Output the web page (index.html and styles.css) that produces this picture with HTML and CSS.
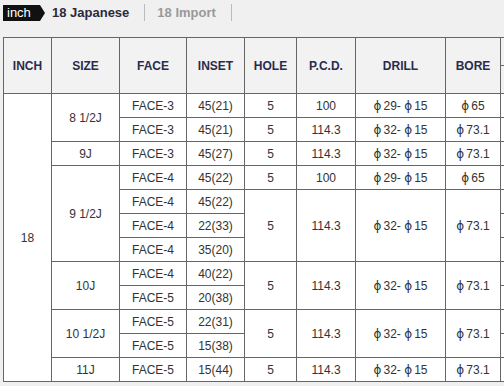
FILE: index.html
```html
<!DOCTYPE html>
<html>
<head>
<meta charset="utf-8">
<link rel="stylesheet" href="styles.css">
</head>
<body>
<div class="tabs">
  <span class="unit">inch</span>
  <span class="tab active">18 Japanese</span>
  <span class="sep"></span>
  <span class="tab">18 Import</span>
  <span class="sep"></span>
</div>
<table class="spec">
  <colgroup>
    <col class="c-inch"><col class="c-size"><col class="c-face"><col class="c-inset"><col class="c-hole"><col class="c-pcd"><col class="c-drill"><col class="c-bore"><col class="c-x"><col class="c-x">
  </colgroup>
  <thead>
    <tr class="h1">
      <th rowspan="2">INCH</th><th rowspan="2">SIZE</th><th rowspan="2">FACE</th><th rowspan="2">INSET</th><th rowspan="2">HOLE</th><th rowspan="2">P.C.D.</th><th rowspan="2">DRILL</th><th rowspan="2">BORE</th><th colspan="2"></th>
    </tr>
    <tr class="h2"><th></th><th></th></tr>
  </thead>
  <tbody>
    <tr><td rowspan="12">18</td><td rowspan="2">8 1/2J</td><td>FACE-3</td><td>45(21)</td><td>5</td><td>100</td><td><span class="phi">ϕ</span>29- <span class="phi">ϕ</span>15</td><td><span class="phi">ϕ</span>65</td><td></td><td></td></tr>
    <tr><td>FACE-3</td><td>45(21)</td><td>5</td><td>114.3</td><td><span class="phi">ϕ</span>32- <span class="phi">ϕ</span>15</td><td><span class="phi">ϕ</span>73.1</td><td></td><td></td></tr>
    <tr><td>9J</td><td>FACE-3</td><td>45(27)</td><td>5</td><td>114.3</td><td><span class="phi">ϕ</span>32- <span class="phi">ϕ</span>15</td><td><span class="phi">ϕ</span>73.1</td><td></td><td></td></tr>
    <tr><td rowspan="4">9 1/2J</td><td>FACE-4</td><td>45(22)</td><td>5</td><td>100</td><td><span class="phi">ϕ</span>29- <span class="phi">ϕ</span>15</td><td><span class="phi">ϕ</span>65</td><td></td><td></td></tr>
    <tr><td>FACE-4</td><td>45(22)</td><td rowspan="3">5</td><td rowspan="3">114.3</td><td rowspan="3"><span class="phi">ϕ</span>32- <span class="phi">ϕ</span>15</td><td rowspan="3"><span class="phi">ϕ</span>73.1</td><td></td><td></td></tr>
    <tr><td>FACE-4</td><td>22(33)</td><td></td><td></td></tr>
    <tr><td>FACE-4</td><td>35(20)</td><td></td><td></td></tr>
    <tr><td rowspan="2">10J</td><td>FACE-4</td><td>40(22)</td><td rowspan="2">5</td><td rowspan="2">114.3</td><td rowspan="2"><span class="phi">ϕ</span>32- <span class="phi">ϕ</span>15</td><td rowspan="2"><span class="phi">ϕ</span>73.1</td><td></td><td></td></tr>
    <tr><td>FACE-5</td><td>20(38)</td><td></td><td></td></tr>
    <tr><td rowspan="2">10 1/2J</td><td>FACE-5</td><td>22(31)</td><td rowspan="2">5</td><td rowspan="2">114.3</td><td rowspan="2"><span class="phi">ϕ</span>32- <span class="phi">ϕ</span>15</td><td rowspan="2"><span class="phi">ϕ</span>73.1</td><td></td><td></td></tr>
    <tr><td>FACE-5</td><td>15(38)</td><td></td><td></td></tr>
    <tr><td>11J</td><td>FACE-5</td><td>15(44)</td><td>5</td><td>114.3</td><td><span class="phi">ϕ</span>32- <span class="phi">ϕ</span>15</td><td><span class="phi">ϕ</span>73.1</td><td></td><td></td></tr>
  </tbody>
</table>
</body>
</html>
```

FILE: styles.css
```css
html, body {
  margin: 0;
  padding: 0;
  background: #f0f0f0;
  overflow: hidden;
}
body {
  padding: 4px 0 0 3px;
  font-family: "Liberation Sans", Arial, "Noto Sans CJK KR", sans-serif;
  color: #333;
}
.tabs {
  display: flex;
  align-items: center;
  height: 17px;
}
.unit {
  position: relative;
  display: block;
  background: #111;
  color: #fff;
  font-size: 13px;
  line-height: 16px;
  height: 16px;
  padding: 0 5px 0 4px;
  width: 28px;
  margin-right: 12px;
}
.unit::after {
  content: "";
  position: absolute;
  left: 100%;
  top: 0;
  border-style: solid;
  border-width: 8px 0 8px 5px;
  border-color: transparent transparent transparent #111;
}
.tab {
  font-size: 13px;
  font-weight: bold;
  color: #999;
  line-height: 16px;
}
.tab.active {
  color: #2a2a3a;
}
.sep {
  display: block;
  width: 1px;
  height: 17px;
  background: #bbb;
  margin: 0 12px 0 15px;
}
.spec {
  margin-top: 16px;
  border-collapse: collapse;
  table-layout: fixed;
  width: 697px;
  font-size: 12px;
}
.c-inch { width: 48px; }
.c-size { width: 68px; }
.c-face { width: 67px; }
.c-inset { width: 58px; }
.c-hole { width: 52px; }
.c-pcd { width: 59px; }
.c-drill { width: 90px; }
.c-bore { width: 55px; }
.c-x { width: 100px; }
.spec th, .spec td {
  border: 1px solid #666;
  padding: 0;
  text-align: center;
  white-space: nowrap;
}
.spec th {
  background: #f2f2f2;
  color: #2b2b4d;
  font-weight: bold;
  font-size: 12px;
}
.h1 th { height: 27px; }
.h2 th { height: 27px; }
.spec td {
  background: #fff;
  height: 23px;
  color: #333;
}
.phi {
  display: inline-block;
  width: 10px;
  text-align: left;
  font-family: "DejaVu Sans", sans-serif;
  font-size: 12px;
}
```
